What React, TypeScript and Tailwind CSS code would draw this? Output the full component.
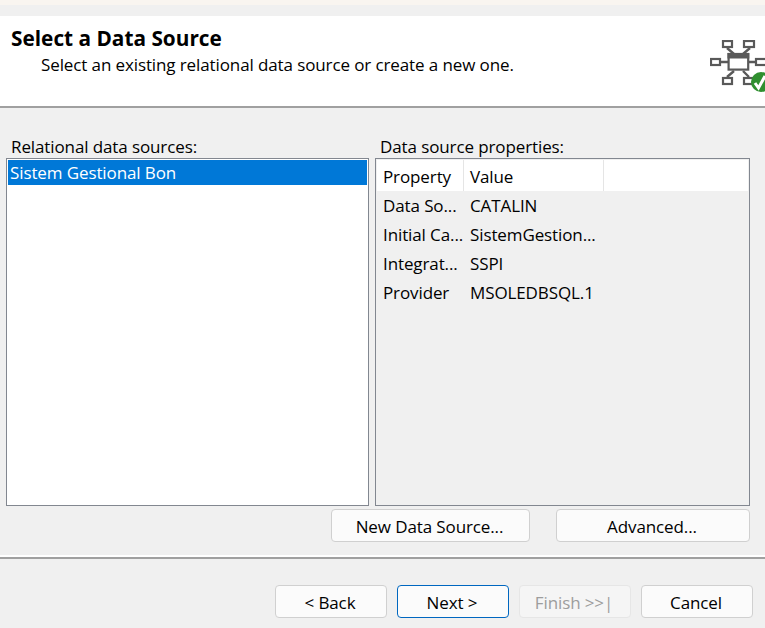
const font = { fontFamily: '"Open Sans", "Noto Sans", sans-serif' };

const rows = [
  ['Data So...', 'CATALIN'],
  ['Initial Ca...', 'SistemGestion...'],
  ['Integrat...', 'SSPI'],
  ['Provider', 'MSOLEDBSQL.1'],
];

function DataSourceIcon() {
  return (
    <svg width="55" height="56" viewBox="0 0 55 56" className="block">
      <g stroke="#595959" strokeWidth="2.2" fill="none">
        <path d="M17 8 L24 14 M40 8 L33 14 M17 37 L24 31 M39 37 L33 31" strokeWidth="2.4" />
        <path d="M11 22 H18 M39 22 H45" strokeWidth="2.4" />
        <rect x="13" y="1" width="9" height="6" />
        <rect x="34" y="1" width="10" height="6" />
        <rect x="1" y="19" width="9" height="6" />
        <rect x="46" y="19" width="12" height="6" />
        <rect x="13" y="38" width="9" height="6" />
        <rect x="34" y="38" width="10" height="6" />
        <rect x="18.6" y="14" width="19.6" height="15.6" fill="#fff" />
      </g>
      <rect x="17.5" y="13" width="21.8" height="5.5" fill="#595959" />
      <circle cx="51" cy="42" r="10" fill="#2f8f2f" />
      <path d="M45 43 L48.5 48 L55 36" stroke="#fff" strokeWidth="3" fill="none" />
    </svg>
  );
}

function Btn({ label, w, kind }: { label: string; w: string; kind?: 'primary' | 'disabled' }) {
  let cls = 'border-[#d0d0d0] bg-[#fbfbfb] text-black';
  if (kind === 'primary') cls = 'border-[#0067c0] bg-[#fbfbfb] text-black';
  if (kind === 'disabled') cls = 'border-[#e6e6e6] bg-[#f5f5f5] text-[#9d9d9d]';
  return (
    <button className={`h-[33px] ${w} rounded-[4px] border pr-[2px] pt-[2px] text-[17px] leading-none tracking-[-0.11px] ${cls}`}>{label}</button>
  );
}

export default function App() {
  return (
    <div style={font} className="flex h-[628px] w-[765px] flex-col overflow-hidden bg-[#f0f0f0] text-[17px] tracking-[-0.11px] text-black">
      <div className="h-[5px] bg-[#f9f5f0]" />
      <div className="h-[11px]" />
      <div className="flex h-[90px] justify-between overflow-hidden bg-white">
        <div className="pl-[11px] pt-[9px]">
          <div className="text-[20.8px] font-bold leading-[26px] tracking-normal">Select a Data Source</div>
          <div className="pl-[30px] leading-[27px]">Select an existing relational data source or create a new one.</div>
        </div>
        <div className="w-[55px] shrink-0 pt-[24px]">
          <DataSourceIcon />
        </div>
      </div>
      <div className="h-[2px] bg-[#a0a0a0]" />

      <div className="flex gap-[6px] pl-[6px] pr-[15px] pt-[27px]">
        <div className="w-[363px]">
          <div className="h-[23px] pl-[5px] leading-[23px]">Relational data sources:</div>
          <div className="h-[348px] border border-[#828790] bg-white p-[1px]">
            <div className="h-[25px] bg-[#0078d7] pl-[2px] leading-[25px] text-white">Sistem Gestional Bon</div>
          </div>
        </div>
        <div className="w-[375px]">
          <div className="h-[23px] pl-[5px] leading-[23px]">Data source properties:</div>
          <div className="h-[348px] border border-[#828790] bg-[#f0f0f0] p-[1px]">
            <div className="flex h-[31px] bg-white leading-[33px]">
              <div className="w-[87px] border-r border-[#e5e5e5] pl-[6px]">Property</div>
              <div className="w-[140px] border-r border-[#e5e5e5] pl-[6px]">Value</div>
            </div>
            {rows.map(([k, v]) => (
              <div key={k} className="flex h-[29px] leading-[29px]">
                <div className="w-[87px] overflow-hidden whitespace-nowrap pl-[6px]">{k}</div>
                <div className="whitespace-nowrap pl-[6px]">{v}</div>
              </div>
            ))}
          </div>
        </div>
      </div>

      <div className="flex justify-end gap-[26px] pr-[15px] pt-[3px]">
        <Btn label="New Data Source..." w="w-[199px]" />
        <Btn label="Advanced..." w="w-[194px]" />
      </div>

      <div className="mt-[13px] h-[2px] bg-white" />
      <div className="h-[2px] bg-[#a0a0a0]" />

      <div className="flex justify-end gap-[10px] pr-[12px] pt-[26px]">
        <Btn label="< Back" w="w-[112px]" />
        <Btn label="Next >" w="w-[112px]" kind="primary" />
        <Btn label="Finish >>|" w="w-[112px]" kind="disabled" />
        <Btn label="Cancel" w="w-[112px]" />
      </div>
    </div>
  );
}
